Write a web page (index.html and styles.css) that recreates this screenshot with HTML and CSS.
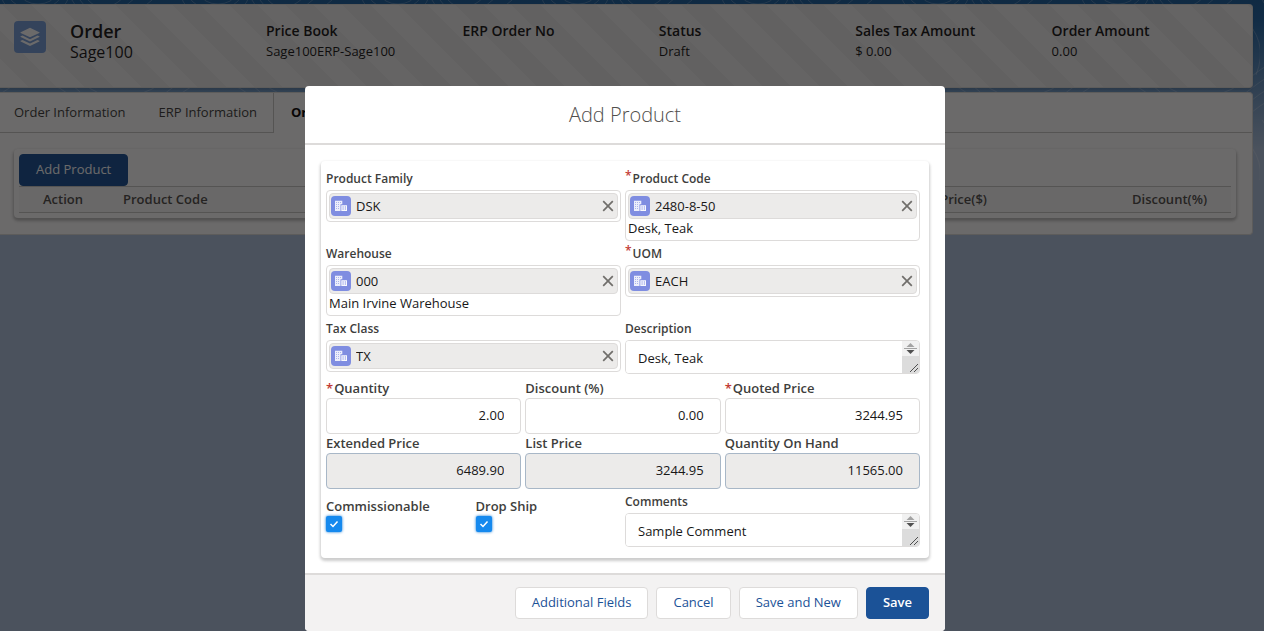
FILE: index.html
```html
<!DOCTYPE html>
<html lang="en">
<head>
  <meta charset="UTF-8">
  <meta name="viewport" content="width=device-width, initial-scale=1.0">
  <title>Order - Add Product</title>
  <link rel="stylesheet" href="styles.css">
</head>
<body>
  <!-- shared icons -->
  <svg class="sprite" aria-hidden="true">
    <symbol id="icon-account" viewBox="0 0 20 20">
      <path fill="#fff" fill-opacity=".85" d="M4 4.700h7.300v3.600H9.500V15H4z"/>
      <path fill="#fff" fill-opacity=".95" d="M10.300 9.200H16V15h-5.700z"/>
      <path fill="#7f8de1" fill-opacity=".6" d="M5 6h1v1H5zM7 6h1v1H7zM9 6h1v1H9zM5 8h1v1H5zM7 8h1v1H7zM5 10h1v1H5zM7 10h1v1H7zM5 12h1v1H5zM7 12h1v1H7z"/>
      <path fill="#7f8de1" d="M11.500 10.500h1.200v1h-1.200zM13.800 10.500H15v1h-1.200zM11.500 12.600h1.200v1h-1.200zM13.800 12.600H15v1h-1.200z"/>
    </symbol>
    <symbol id="icon-close" viewBox="0 0 12 12">
      <path d="M1.200 1.200l9.600 9.600M10.800 1.200L1.200 10.800" fill="none" stroke="#706e6b" stroke-width="1.700"/>
    </symbol>
  </svg>

  <div class="page">
    <svg class="contours" aria-hidden="true">
      <defs>
        <pattern id="topo" width="180" height="120" patternUnits="userSpaceOnUse">
          <g fill="none" stroke="#fff" stroke-opacity=".22">
            <ellipse cx="35" cy="-6" rx="34" ry="22"/>
            <ellipse cx="35" cy="-6" rx="26" ry="15"/>
            <ellipse cx="38" cy="-6" rx="17" ry="10"/>
            <path d="M80 0q20 30 55 -2M88 0q15 16 35 -2M72 0q26 50 80 0"/>
            <path d="M0 70q40 -30 80 10t100 -10M0 82q40 -30 80 10t100 -10M0 94q40 -30 80 10t100 -10M0 106q40 -30 80 10t100 -10"/>
            <path d="M150 20q30 10 20 50M160 15q30 25 16 60"/>
          </g>
        </pattern>
      </defs>
      <rect width="100%" height="100%" fill="url(#topo)"/>
    </svg>

    <header class="order-header">
      <div class="order-title">
        <span class="order-icon">
          <svg width="20" height="20" viewBox="0 0 20 20" fill="#fff">
            <path d="M10 .8l9.300 4.400c.4.200.4.500 0 .7L10 10.300.7 5.900c-.4-.2-.4-.5 0-.7z"/>
            <path d="M.7 9.300l1.800-.8L10 12.200l7.500-3.700 1.800.8c.4.200.4.500 0 .7L10 14.600.7 10c-.4-.2-.4-.5 0-.7z"/>
            <path d="M.7 13.700l1.800-.8L10 16.600l7.500-3.700 1.800.8c.4.200.4.500 0 .7L10 19 .7 14.400c-.4-.2-.4-.5 0-.7z"/>
          </svg>
        </span>
        <div>
          <h1>Order</h1>
          <p>Sage100</p>
        </div>
      </div>
      <dl class="order-field"><dt>Price Book</dt><dd>Sage100ERP-Sage100</dd></dl>
      <dl class="order-field"><dt>ERP Order No</dt><dd></dd></dl>
      <dl class="order-field"><dt>Status</dt><dd>Draft</dd></dl>
      <dl class="order-field"><dt>Sales Tax Amount</dt><dd>$ 0.00</dd></dl>
      <dl class="order-field"><dt>Order Amount</dt><dd>0.00</dd></dl>
    </header>

    <main class="order-body">
      <nav class="tabs">
        <a href="#" class="tab">Order Information</a>
        <a href="#" class="tab">ERP Information</a>
        <a href="#" class="tab active">Order Lines</a>
        <span class="tab-rest"></span>
      </nav>
      <section class="lines">
        <button type="button" class="btn btn-brand">Add Product</button>
        <table class="lines-table">
          <thead>
            <tr>
              <th class="col-action">Action</th>
              <th class="col-code">Product Code</th>
              <th class="col-price">Price($)</th>
              <th class="col-discount">Discount(%)</th>
            </tr>
          </thead>
        </table>
      </section>
    </main>
  </div>

  <div class="backdrop">
    <form class="modal" role="dialog" aria-labelledby="modal-title">
      <h2 class="modal-header" id="modal-title">Add Product</h2>

      <div class="modal-body">
        <div class="panel">
          <div class="row two">
            <div class="field">
              <label for="family">Product Family</label>
              <div class="lookup">
                <div class="pill">
                  <svg class="pill-icon"><use href="#icon-account"/></svg>
                  <input id="family" type="text" value="DSK" readonly>
                  <button type="button" class="remove" aria-label="Remove"><svg width="12" height="12"><use href="#icon-close"/></svg></button>
                </div>
              </div>
            </div>
            <div class="field">
              <label for="code"><abbr class="raised">*</abbr>Product Code</label>
              <div class="lookup">
                <div class="pill">
                  <svg class="pill-icon"><use href="#icon-account"/></svg>
                  <input id="code" type="text" value="2480-8-50" readonly>
                  <button type="button" class="remove" aria-label="Remove"><svg width="12" height="12"><use href="#icon-close"/></svg></button>
                </div>
                <p>Desk, Teak</p>
              </div>
            </div>
          </div>

          <div class="row two">
            <div class="field">
              <label for="warehouse">Warehouse</label>
              <div class="lookup">
                <div class="pill">
                  <svg class="pill-icon"><use href="#icon-account"/></svg>
                  <input id="warehouse" type="text" value="000" readonly>
                  <button type="button" class="remove" aria-label="Remove"><svg width="12" height="12"><use href="#icon-close"/></svg></button>
                </div>
                <p>Main Irvine Warehouse</p>
              </div>
            </div>
            <div class="field">
              <label for="uom"><abbr class="raised">*</abbr>UOM</label>
              <div class="lookup">
                <div class="pill">
                  <svg class="pill-icon"><use href="#icon-account"/></svg>
                  <input id="uom" type="text" value="EACH" readonly>
                  <button type="button" class="remove" aria-label="Remove"><svg width="12" height="12"><use href="#icon-close"/></svg></button>
                </div>
              </div>
            </div>
          </div>

          <div class="row two">
            <div class="field">
              <label for="tax">Tax Class</label>
              <div class="lookup">
                <div class="pill">
                  <svg class="pill-icon"><use href="#icon-account"/></svg>
                  <input id="tax" type="text" value="TX" readonly>
                  <button type="button" class="remove" aria-label="Remove"><svg width="12" height="12"><use href="#icon-close"/></svg></button>
                </div>
              </div>
            </div>
            <div class="field">
              <label for="description">Description</label>
              <div class="textarea">
                <textarea id="description" rows="1">Desk, Teak</textarea>
                <svg class="scroller" width="17" height="32" viewBox="0 0 17 32" aria-hidden="true">
                  <path fill="#f1f1f1" d="M0 0h17v15H0z"/><path fill="#dcdcdc" d="M0 15h17v17H0z"/>
                  <path fill="#a3a3a3" d="M8.500 2l4 4h-8zM2 7h13v1H2z"/><path fill="#505050" d="M4.500 9h8l-4 4z"/>
                  <path stroke="#505050" d="M8 31l8-8M12 31l4-4"/>
                </svg>
              </div>
            </div>
          </div>

          <div class="row three">
            <div class="field large">
              <label for="qty"><abbr>*</abbr>Quantity</label>
              <input class="number" id="qty" type="text" value="2.00">
            </div>
            <div class="field large">
              <label for="discount">Discount (%)</label>
              <input class="number" id="discount" type="text" value="0.00">
            </div>
            <div class="field large">
              <label for="quoted"><abbr>*</abbr>Quoted Price</label>
              <input class="number" id="quoted" type="text" value="3244.95">
            </div>
            <div class="field large">
              <label for="extended">Extended Price</label>
              <input class="number" id="extended" type="text" value="6489.90" readonly>
            </div>
            <div class="field large">
              <label for="list">List Price</label>
              <input class="number" id="list" type="text" value="3244.95" readonly>
            </div>
            <div class="field large">
              <label for="onhand">Quantity On Hand</label>
              <input class="number" id="onhand" type="text" value="11565.00" readonly>
            </div>
          </div>

          <div class="row options">
            <div class="row checks">
              <div class="check">
                <label for="commissionable">Commissionable</label>
                <input id="commissionable" type="checkbox" checked>
              </div>
              <div class="check">
                <label for="dropship">Drop Ship</label>
                <input id="dropship" type="checkbox" checked>
              </div>
            </div>
            <div class="field">
              <label for="comments">Comments</label>
              <div class="textarea">
                <textarea id="comments" rows="1">Sample Comment</textarea>
                <svg class="scroller" width="17" height="32" viewBox="0 0 17 32" aria-hidden="true">
                  <path fill="#f1f1f1" d="M0 0h17v15H0z"/><path fill="#dcdcdc" d="M0 15h17v17H0z"/>
                  <path fill="#a3a3a3" d="M8.500 2l4 4h-8zM2 7h13v1H2z"/><path fill="#505050" d="M4.500 9h8l-4 4z"/>
                  <path stroke="#505050" d="M8 31l8-8M12 31l4-4"/>
                </svg>
              </div>
            </div>
          </div>
        </div>
      </div>

      <footer class="modal-footer">
        <button type="button" class="btn">Additional Fields</button>
        <button type="button" class="btn">Cancel</button>
        <button type="button" class="btn">Save and New</button>
        <button type="submit" class="btn btn-brand btn-save">Save</button>
      </footer>
    </form>
  </div>
</body>
</html>
```
FILE: styles.css
```css
* {
  box-sizing: border-box;
  margin: 0;
  padding: 0;
}
body {
  font-family: "Open Sans", "Noto Sans", sans-serif;
  font-size: 13px;
  line-height: 20px;
  color: #181717;
  background: #b0c4df;
  overflow: hidden;
}
input, textarea, button {
  font: inherit;
  color: inherit;
}
.sprite {
  position: absolute;
  width: 0;
  height: 0;
}

/* page behind the dialog */
.page {
  min-height: 100vh;
  padding: 4px 11px 0 0;
  background: linear-gradient(#1b5f9e, #1f64a4 20px, #b0c4df 150px);
}
.contours {
  position: absolute;
  top: 0;
  left: 0;
  width: 100%;
  height: 180px;
}
.order-header {
  position: relative;
  display: grid;
  grid-template-columns: 252px repeat(5, 1fr);
  min-height: 84px;
  padding: 16px 4px 0 14px;
  border: 1px solid #dddbda;
  border-left: 0;
  border-radius: 0 4px 4px 0;
  background: repeating-linear-gradient(45deg, #f1f1f1 0 20px, #e9e9e9 20px 40px);
  box-shadow: 0 2px 2px rgba(0, 0, 0, .1);
}
.order-title {
  display: flex;
  gap: 24px;
}
.order-icon {
  display: flex;
  align-items: center;
  justify-content: center;
  width: 32px;
  height: 32px;
  border-radius: 4px;
  background: #769ed9;
}
h1 {
  font-size: 18px;
  font-weight: 600;
  line-height: 20px;
}
.order-title p {
  font-size: 16px;
  line-height: 22px;
}
.order-field dt {
  font-size: 14px;
  font-weight: 600;
}
.order-body {
  position: relative;
  margin-top: 4px;
  padding-bottom: 16px;
  border: 1px solid #dddbda;
  border-left: 0;
  border-radius: 0 4px 4px 0;
  background: #fff;
}
.tabs {
  display: flex;
  height: 40px;
}
.tab {
  padding: 9px 16px 0 17px;
  border-bottom: 1px solid #c9c7c5;
  color: #3e3e3c;
  text-decoration: none;
}
.tab:first-child {
  padding-left: 14px;
}
.tab.active {
  border-left: 1px solid #c9c7c5;
  border-bottom: 0;
  color: #080707;
  font-weight: 700;
}
.tab-rest {
  flex: 1;
  border-bottom: 1px solid #c9c7c5;
}
.lines {
  margin: 16px 16px 0 14px;
  padding: 5px;
  border-radius: 4px;
  box-shadow: 0 2px 3px 1px rgba(0, 0, 0, .25);
}
.lines-table {
  width: 100%;
  border-collapse: collapse;
  border-top: 1px solid #c9c7c5;
  border-bottom: 1px solid #c9c7c5;
  background: #fafaf9;
  color: #514f4d;
}
.lines-table th {
  height: 26px;
  padding-bottom: 2px;
  font-weight: 600;
  text-align: left;
}
.lines-table .col-action {
  width: 104px;
  padding-left: 24px;
}
.lines-table .col-price {
  text-align: right;
}
.lines-table .col-discount {
  width: 244px;
  padding-right: 24px;
  text-align: right;
}

/* dialog */
.backdrop {
  position: fixed;
  inset: 0;
  display: flex;
  justify-content: center;
  align-items: flex-end;
  padding-right: 14px;
  background: rgba(8, 7, 7, .6);
}
.modal {
  width: 50%;
  min-width: 640px;
  border-radius: 4px;
  background: #fff;
}
.modal-header {
  padding: 16px;
  border-bottom: 2px solid #dddbda;
  color: #514f4d;
  font-size: 20px;
  font-weight: 300;
  line-height: 25px;
  text-align: center;
}
.modal-body {
  padding: 16px 16px 15px;
}
.panel {
  padding: 8px 9px 11px 5px;
  border-radius: 4px;
  box-shadow: 0 2px 3px 1px rgba(0, 0, 0, .2);
}
.row {
  display: grid;
  gap: 0 4px;
}
.two {
  grid-template-columns: 1fr 1fr;
  min-height: 75px;
}
.two + .two + .two {
  min-height: 60px;
}
.three {
  grid-template-columns: 1fr 1fr 1fr;
}
.options {
  grid-template-columns: 1fr 1fr;
  margin-top: 3px;
}
.checks {
  grid-template-columns: 1fr 1fr;
}
label {
  display: block;
  color: #3e3e3c;
  font-size: 12px;
  font-weight: 600;
}
.large label,
.check label {
  font-size: 13px;
}
abbr {
  margin-right: 1px;
  color: #c23934;
}
.raised {
  position: relative;
  top: -3px;
}
.lookup {
  margin-top: 1px;
  padding: 2px;
  border: 1px solid #dddbda;
  border-radius: 4px;
}
.lookup p {
  line-height: 19px;
}
.pill {
  display: flex;
  align-items: center;
  height: 26px;
  padding: 0 3px 0 1px;
  border: 1px solid #dddbda;
  border-radius: 4px;
  background: #ecebea;
}
.pill-icon {
  width: 20px;
  height: 20px;
  border-radius: 4px;
  background: #7f8de1;
}
.pill input {
  flex: 1;
  min-width: 0;
  margin-left: 5px;
  border: 0;
  background: none;
}
.remove {
  display: flex;
  border: 0;
  background: none;
}
.textarea {
  display: flex;
  height: 34px;
  margin-top: 1px;
  border: 1px solid #dddbda;
  border-radius: 4px;
  overflow: hidden;
}
.textarea textarea {
  flex: 1;
  min-width: 0;
  padding: 7px 12px 0;
  border: 0;
  resize: none;
  overflow: hidden;
}
.number {
  display: block;
  width: 100%;
  height: 36px;
  padding: 0 16px 2px;
  border: 1px solid #dddbda;
  border-radius: 4px;
  text-align: right;
}
.large label {
  line-height: 19px;
}
.number[readonly] {
  border-color: #a8b7c7;
  background: #ecebea;
}
.check {
  padding-top: 4px;
}
.check input {
  display: block;
  appearance: none;
  width: 16px;
  height: 16px;
  border-radius: 2px;
  background: #1589ee url("data:image/svg+xml,%3Csvg xmlns='http://www.w3.org/2000/svg' viewBox='0 0 16 16'%3E%3Cpath d='M4.500 8l2.500 2.500 4.500-5' fill='none' stroke='%23fff' stroke-width='1.500'/%3E%3C/svg%3E");
  box-shadow: 0 0 3px #0070d2;
}
.modal-footer {
  display: flex;
  justify-content: flex-end;
  gap: 8px;
  padding: 12px 16px;
  border-top: 2px solid #dddbda;
  border-radius: 0 0 4px 4px;
  background: #f3f2f2;
}
.btn {
  height: 32px;
  padding: 0 16px 2px;
  border: 1px solid #dddbda;
  border-radius: 4px;
  background: #fff;
  color: #1b5297;
}
.btn-brand {
  border-color: #1b5297;
  background: #1b5297;
  color: #fff;
}
.btn-save {
  font-weight: 600;
}
```
